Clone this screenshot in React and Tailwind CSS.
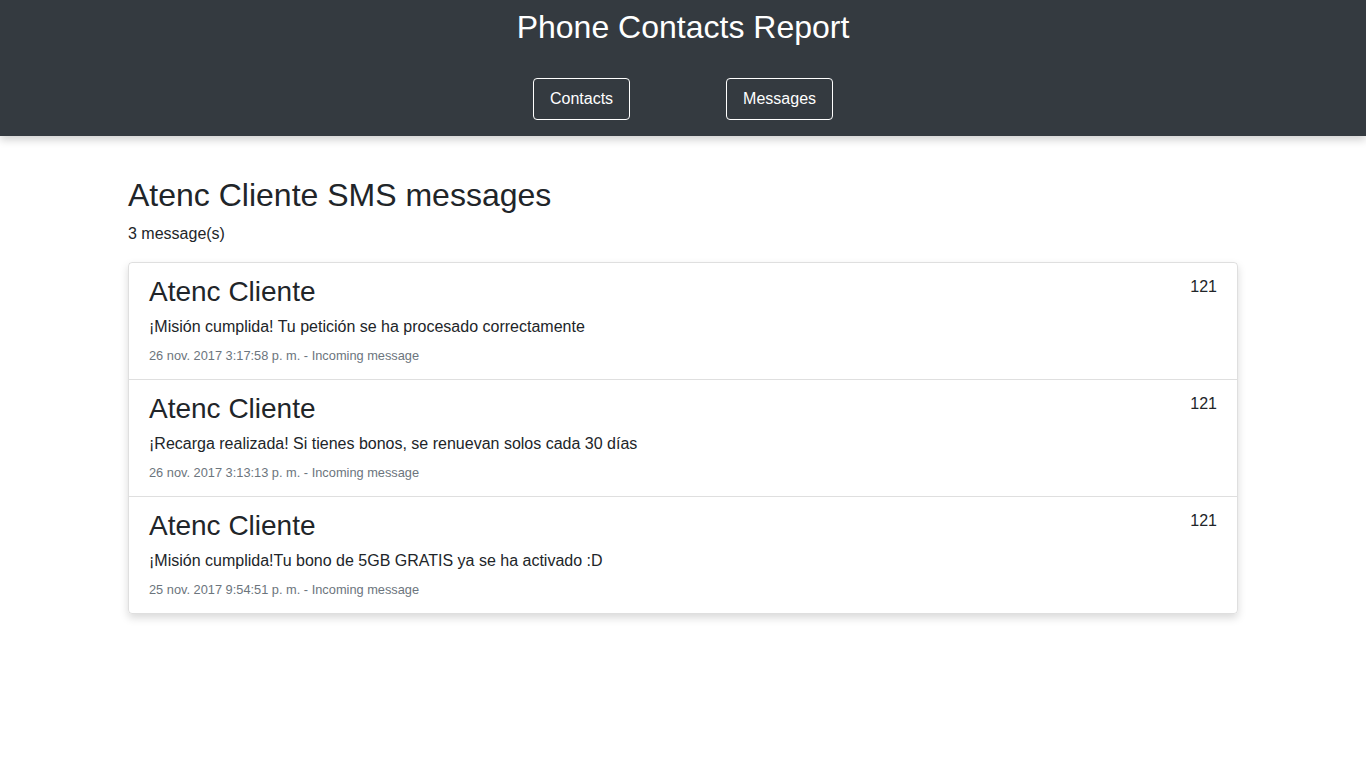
import React from 'react';

const messages = [
    { id: 1, name: 'Atenc Cliente', number: '121', body: '¡Misión cumplida! Tu petición se ha procesado correctamente', date: '26 nov. 2017 3:17:58 p. m.', kind: 'Incoming message' },
    { id: 2, name: 'Atenc Cliente', number: '121', body: '¡Recarga realizada! Si tienes bonos, se renuevan solos cada 30 días', date: '26 nov. 2017 3:13:13 p. m.', kind: 'Incoming message' },
    { id: 3, name: 'Atenc Cliente', number: '121', body: '¡Misión cumplida!Tu bono de 5GB GRATIS ya se ha activado :D', date: '25 nov. 2017 9:54:51 p. m.', kind: 'Incoming message' },
];

function Header() {
    return (
        <header className="bg-[#343a40] text-white h-[136px] pt-2 shadow-[0_4px_8px_rgba(0,0,0,0.18)] relative z-10">
            <h1 className="text-center text-[32px] leading-[38px] font-normal">Phone Contacts Report</h1>
            <nav className="mt-8 flex justify-center gap-24">
                <button className="border border-white rounded px-4 py-2 text-base leading-6">Contacts</button>
                <button className="border border-white rounded px-4 py-2 text-base leading-6">Messages</button>
            </nav>
        </header>
    );
}

function MessageItem({ msg, first }) {
    return (
        <li className={`px-5 pt-3 pb-[13px] ${first ? '' : 'border-t border-black/[0.125]'}`}>
            <div className="flex justify-between items-start">
                <h3 className="text-[28px] leading-[34px] font-normal">{msg.name}</h3>
                <span className="text-base leading-6">{msg.number}</span>
            </div>
            <p className="mt-[6px] text-base leading-6">{msg.body}</p>
            <p className="mt-[7px] text-[12.8px] leading-5 text-[#6c757d]">{msg.date} - {msg.kind}</p>
        </li>
    );
}

export default function App() {
    return (
        <div className="min-h-screen bg-white text-[#212529]" style={{ fontFamily: '"Liberation Sans", Arial, sans-serif' }}>
            <Header />
            <main className="w-[1110px] mx-auto pt-10">
                <h2 className="text-[32px] leading-[38px] font-normal">Atenc Cliente SMS messages</h2>
                <p className="mt-2 text-base leading-6">{messages.length} message(s)</p>
                <ul className="mt-4 border border-black/[0.125] rounded shadow-[0_4px_8px_rgba(0,0,0,0.15)]">
                    {messages.map((m, i) => <MessageItem key={m.id} msg={m} first={i === 0} />)}
                </ul>
            </main>
        </div>
    );
}
